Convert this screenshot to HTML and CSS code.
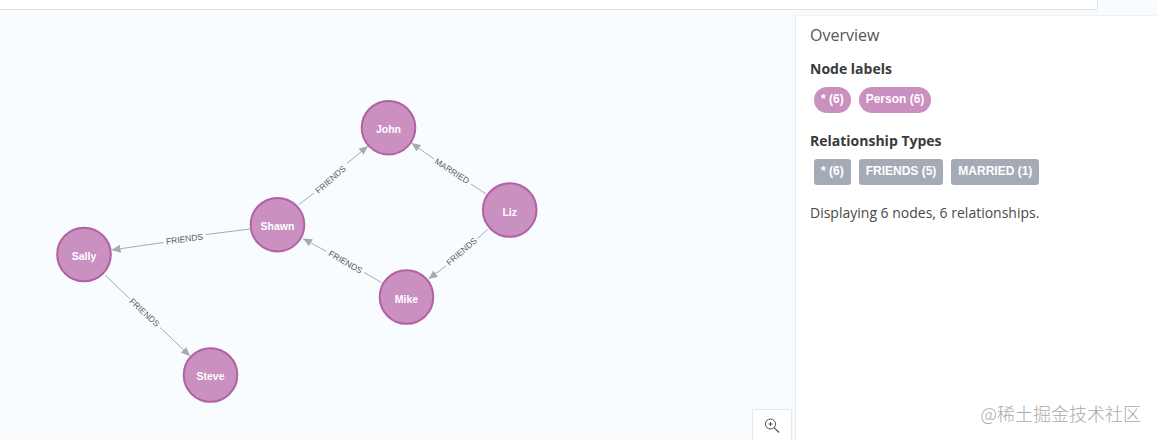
FILE: index.html

```html
<!DOCTYPE html>
<html lang="en">
<head>
  <meta charset="UTF-8">
  <title>Graph result</title>
  <link rel="stylesheet" href="styles.css">
</head>
<body>
  <div class="topbar"></div>

  <div class="result">
    <div class="canvas">
      <svg class="graph" width="796" height="430" viewBox="0 10 796 430">
        <defs>
          <marker id="arrow" markerUnits="userSpaceOnUse" markerWidth="10" markerHeight="10" refX="9" refY="5" orient="auto">
            <path d="M0 1 L9 5 L0 9 Z" fill="#a5abb6"></path>
          </marker>
        </defs>

        <!-- Shawn to John -->
        <line class="rel" x1="299" y1="204.5" x2="314" y2="193"></line>
        <line class="rel" x1="347" y1="163.5" x2="368" y2="146" marker-end="url(#arrow)"></line>
        <text class="rel-label" transform="translate(330.5 179.5) rotate(-41.5)" dy="3">FRIENDS</text>

        <!-- Liz to John -->
        <line class="rel" x1="486" y1="194" x2="471" y2="184"></line>
        <line class="rel" x1="434" y1="159" x2="411.5" y2="143" marker-end="url(#arrow)"></line>
        <text class="rel-label" transform="translate(452 171) rotate(33)" dy="3">MARRIED</text>

        <!-- Shawn to Sally -->
        <line class="rel" x1="250" y1="229" x2="206" y2="234.5"></line>
        <line class="rel" x1="163.5" y1="242.5" x2="111.5" y2="250" marker-end="url(#arrow)"></line>
        <text class="rel-label" transform="translate(184.5 239) rotate(-8)" dy="3">FRIENDS</text>

        <!-- Sally to Steve -->
        <line class="rel" x1="105" y1="275" x2="129.5" y2="298.5"></line>
        <line class="rel" x1="160" y1="327.5" x2="190" y2="356" marker-end="url(#arrow)"></line>
        <text class="rel-label" transform="translate(144.5 312.5) rotate(43)" dy="3">FRIENDS</text>

        <!-- Mike to Shawn -->
        <line class="rel" x1="381.5" y1="282.5" x2="364" y2="272.5"></line>
        <line class="rel" x1="326.5" y1="251.5" x2="303" y2="238.5" marker-end="url(#arrow)"></line>
        <text class="rel-label" transform="translate(345.5 262) rotate(30)" dy="3">FRIENDS</text>

        <!-- Liz to Mike -->
        <line class="rel" x1="487.5" y1="229.5" x2="477.5" y2="238.5"></line>
        <line class="rel" x1="446" y1="266" x2="428.5" y2="279" marker-end="url(#arrow)"></line>
        <text class="rel-label" transform="translate(461.5 251.5) rotate(-41)" dy="3">FRIENDS</text>

        <g class="node"><circle cx="388.5" cy="127.7" r="26.8"></circle><text x="388.5" y="133">John</text></g>
        <g class="node"><circle cx="277.5" cy="224.7" r="26.8"></circle><text x="277.5" y="230">Shawn</text></g>
        <g class="node"><circle cx="509.7" cy="210" r="26.8"></circle><text x="509.7" y="216">Liz</text></g>
        <g class="node"><circle cx="84" cy="254.5" r="26.8"></circle><text x="84" y="260">Sally</text></g>
        <g class="node"><circle cx="210.5" cy="375" r="26.8"></circle><text x="210.5" y="380">Steve</text></g>
        <g class="node"><circle cx="406.5" cy="297" r="26.8"></circle><text x="406.5" y="303">Mike</text></g>
      </svg>

      <button class="zoom-btn">
        <svg width="18" height="18" viewBox="0 0 18 18">
          <circle cx="7.5" cy="7" r="5" fill="none" stroke="#4a4f57" stroke-width="1"></circle>
          <path d="M11.2 10.7 L16 15.5" stroke="#4a4f57" stroke-width="1.2"></path>
          <path d="M5.5 7 H9.5 M7.5 5 V9" stroke="#4a4f57" stroke-width="1"></path>
        </svg>
      </button>
    </div>

    <aside class="sidebar">
      <h3 class="sidebar-title">Overview</h3>

      <h4 class="section-title">Node labels</h4>
      <div class="tags">
        <span class="tag tag-node">* (6)</span>
        <span class="tag tag-node">Person (6)</span>
      </div>

      <h4 class="section-title section-rel">Relationship Types</h4>
      <div class="tags">
        <span class="tag tag-rel">* (6)</span>
        <span class="tag tag-rel">FRIENDS (5)</span>
        <span class="tag tag-rel">MARRIED (1)</span>
      </div>

      <p class="summary">Displaying 6 nodes, 6 relationships.</p>
    </aside>
  </div>

  <div class="watermark">@稀土掘金技术社区</div>
</body>
</html>
```

FILE: styles.css

```css
html, body {
  margin: 0;
  height: 100%;
}

body {
  position: relative;
  overflow: hidden;
  background-color: #f8fcff;
  font-family: "Open Sans", sans-serif;
  color: #333;
}

.topbar {
  width: 1097px;
  height: 9px;
  background-color: #fff;
  border-bottom: 1px solid #dfe3e6;
  border-right: 1px solid #e6e9ec;
  border-bottom-right-radius: 3px;
  box-sizing: content-box;
}

.result {
  display: flex;
  height: 430px;
}

.canvas {
  position: relative;
  width: 795px;
  flex: none;
}

.graph {
  display: block;
}

.rel {
  stroke: #a5abb6;
  stroke-width: 1;
}

.rel-label {
  font-family: "Liberation Sans", sans-serif;
  font-size: 8.5px;
  fill: #555a60;
  text-anchor: middle;
}

.node circle {
  fill: #c990c0;
  stroke: #b261a5;
  stroke-width: 2;
}

.node text {
  font-family: "Liberation Sans", sans-serif;
  font-size: 10.5px;
  font-weight: bold;
  fill: #fff;
  text-anchor: middle;
}

.zoom-btn {
  position: absolute;
  left: 752px;
  top: 399px;
  width: 40px;
  height: 32px;
  padding: 0;
  display: flex;
  align-items: center;
  justify-content: center;
  background-color: #fff;
  border: 1px solid #e6e9ef;
  border-bottom: none;
}

.sidebar {
  flex: 1;
  margin-top: 5px;
  padding: 9px 14px;
  background-color: #fff;
  border-left: 1px solid #e3e9ee;
  border-top: 1px solid #eef2f5;
}

.sidebar-title {
  margin: 0;
  font-size: 16px;
  font-weight: 400;
  line-height: 20px;
  color: #555;
}

.section-title {
  margin: 14px 0 0;
  font-size: 14px;
  font-weight: 700;
  line-height: 20px;
  color: #3a3a3a;
}

.section-rel {
  margin-top: 18px;
}

.tags {
  display: flex;
  gap: 8px;
  margin-top: 8px;
  padding-left: 4px;
}

.tag {
  height: 26px;
  padding: 0 7px;
  font-family: "Liberation Sans", sans-serif;
  font-size: 12px;
  font-weight: bold;
  line-height: 24px;
  color: #fff;
  white-space: nowrap;
  box-sizing: border-box;
}

.tag-node {
  background-color: #c990c0;
  border-radius: 13px;
}

.tag-rel {
  background-color: #a5abb6;
  border-radius: 3px;
}

.summary {
  margin: 19px 0 0;
  font-size: 14px;
  line-height: 18px;
  color: #4a4a4a;
}

.watermark {
  position: absolute;
  right: 16px;
  top: 400px;
  font-family: "Noto Sans CJK SC", sans-serif;
  font-size: 18px;
  font-weight: 300;
  line-height: 26px;
  color: #aaa;
  white-space: nowrap;
}
```
